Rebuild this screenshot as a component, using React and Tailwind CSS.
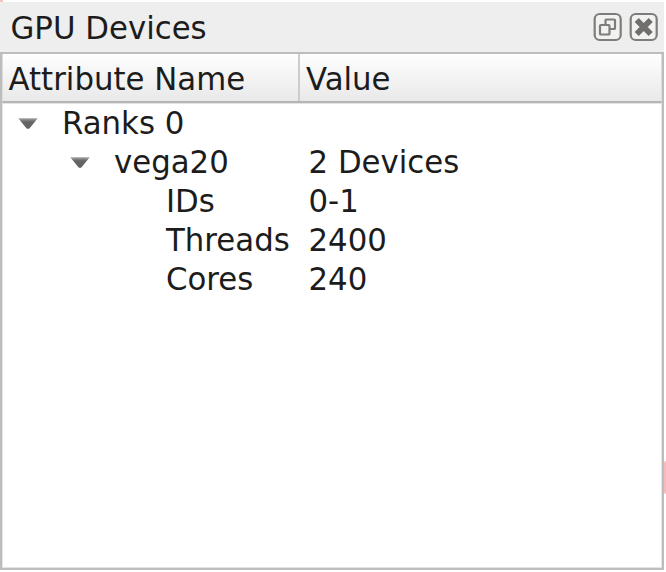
// One line of interface text, slightly condensed like a hinted desktop font.
function Label({ children, className = "" }) {
  return (
    <span className={`inline-block origin-left scale-y-[1.04] whitespace-pre text-[30.8px] leading-[39px] ${className}`}>
      {children}
    </span>
  );
}

function Arrow() {
  return (
    <svg width="20" height="11" viewBox="0 0 20 11" className="mt-[14px] shrink-0">
      <defs>
        <linearGradient id="arrow" x1="0" y1="0" x2="0" y2="1">
          <stop offset="0" stopColor="#a2a2a2" />
          <stop offset="0.35" stopColor="#646464" />
          <stop offset="1" stopColor="#646464" />
        </linearGradient>
      </defs>
      <path d="M0.3 0.3H19.7L11.2 10.8H8.8Z" fill="url(#arrow)" />
    </svg>
  );
}

const rows = [
  { name: "Ranks 0", value: "", indent: "pl-[15px]", open: true },
  { name: "vega20", value: "2 Devices", indent: "pl-[67px]", open: true },
  { name: "IDs", value: "0-1", indent: "pl-[163px]" },
  { name: "Threads", value: "2400", indent: "pl-[163px]" },
  { name: "Cores", value: "240", indent: "pl-[163px]" },
];

export default function App() {
  return (
    <div className="relative flex h-[572px] w-[666px] flex-col overflow-hidden bg-white pt-[2px] pr-[2px] font-['DejaVu_Sans',sans-serif] text-[#1c1c1c]">
      <div className="absolute top-0 left-0 h-[2px] w-[3px] bg-[#f7c4c4]" />
      <div className="absolute top-[461px] left-[664px] h-[33px] w-[2px] rounded-l-[2px] bg-[#f7b9b9]" />
      <header className="flex h-[50px] shrink-0 items-start justify-between bg-[#eeeeee] pr-[5px] pl-[10.5px]">
        <Label className="mt-[7px]">GPU Devices</Label>
        <div className="mt-[10px] flex gap-[6px]">
          <svg width="30" height="30" viewBox="0 0 30 30" fill="none" stroke="#7e7d7b" strokeWidth="2.2">
            <rect x="1.7" y="2" width="26" height="26" rx="5" fill="#f2f2f1" />
            <rect x="12.5" y="7.5" width="9.5" height="9.5" rx="0.8" />
            <rect x="7" y="13" width="9.5" height="9.5" rx="0.8" fill="#f2f2f1" />
          </svg>
          <svg width="30" height="30" viewBox="0 0 30 30" fill="none" stroke="#7e7d7b" strokeWidth="2.2">
            <rect x="1.7" y="2" width="26" height="26" rx="5" fill="#f2f2f1" />
            <path d="M7.7 8L21.7 22M21.7 8L7.7 22" stroke="#706f6d" strokeWidth="5.8" />
          </svg>
        </div>
      </header>
      <main className="flex h-[518px] flex-col border-2 border-[#bdbdbd] bg-white">
        <div className="flex h-[49px] shrink-0 border-x border-b-2 border-x-[#dddddd] border-b-[#b5b5b5] bg-linear-to-b from-[#fefefe] to-[#e9e9e9]">
          <div className="w-[297px] border-r-2 border-[#cccccc] pl-[5.5px]">
            <Label className="mt-[6px]">Attribute Name</Label>
          </div>
          <div className="pl-[6px]">
            <Label className="mt-[6px]">Value</Label>
          </div>
        </div>
        <div className="flex-1 border border-[#e4e4e4]">
          {rows.map((row) => (
            <div key={row.name} className="flex h-[39px]">
              <div className={`flex w-[305.5px] shrink-0 ${row.indent}`}>
                {row.open && <Arrow />}
                <Label className={row.open ? "ml-[24px]" : ""}>{row.name}</Label>
              </div>
              <Label>{row.value}</Label>
            </div>
          ))}
        </div>
      </main>
    </div>
  );
}
